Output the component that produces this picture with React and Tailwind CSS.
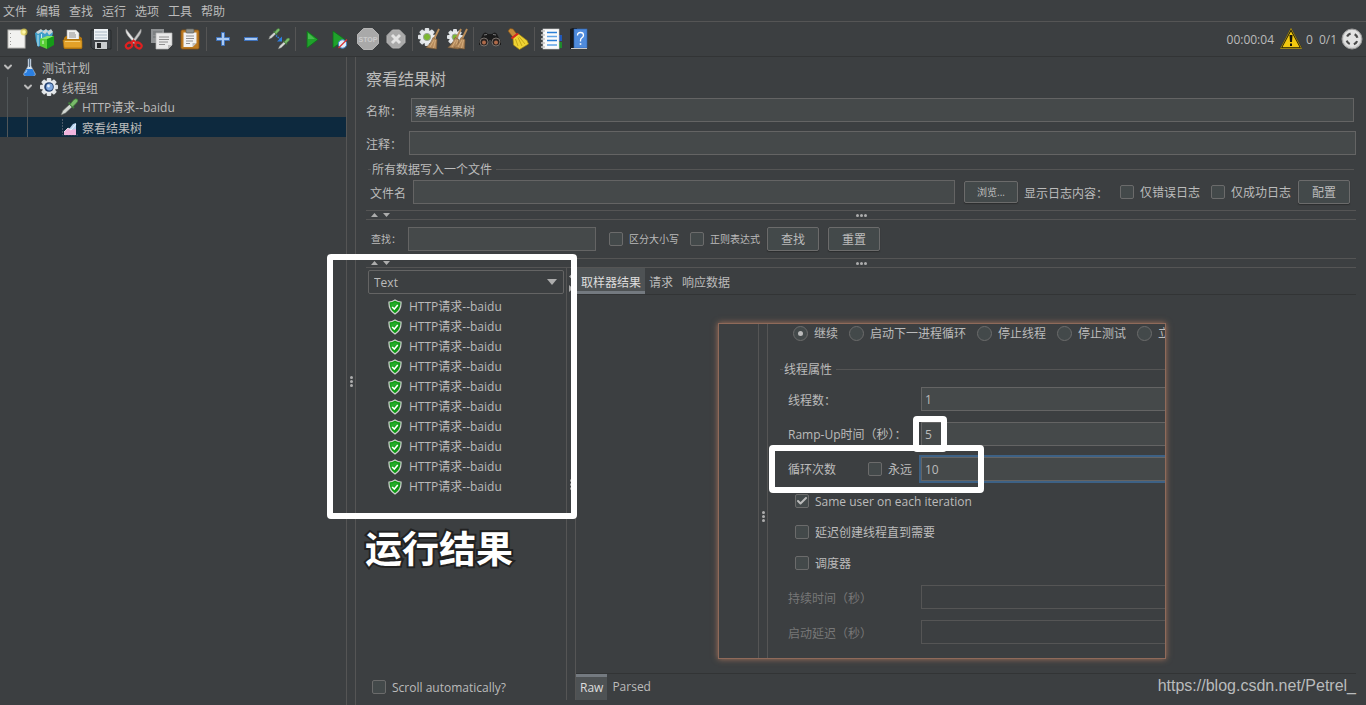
import React, { useState } from 'react';
import { Check, ChevronDown } from 'lucide-react';

const MENUS = ['文件', '编辑', '查找', '运行', '选项', '工具', '帮助'];

const RESULTS = Array.from({ length: 10 }, (_, i) => ({ id: i, name: 'HTTP请求--baidu' }));

const Svg = ({ children, w = 22, h = 22 }) => (
  <svg width={w} height={h} viewBox={`0 0 ${w} ${h}`} fill="none" aria-hidden="true" className="shrink-0">
    {children}
  </svg>
);

const Gear = ({ cx, cy, r, children }) => (
  <g>
    {[0, 45, 90, 135].map((a) => (
      <rect key={a} x={cx - r} y={cy - r / 4} width={r * 2} height={r / 2} rx="1" fill="#dfe3e6" transform={`rotate(${a} ${cx} ${cy})`} />
    ))}
    <circle cx={cx} cy={cy} r={r * 0.76} fill="#e9ecee" />
    {children}
  </g>
);

const Pipette = () => (
  <g>
    <path d="M1 17 3 12.500 10 6 12.500 8.500 5.500 15Z" fill="#d3d7d3" stroke="#6a706a" strokeWidth=".6" />
    <path d="M8.500 4.500 14 10" stroke="#3f7a3c" strokeWidth="1.800" />
    <path d="M10 6.500 13.500 2Q16 0 17.500 1.500T16 5.500L12.500 9Z" fill="#79bb6a" stroke="#3d7a35" strokeWidth=".7" />
  </g>
);

const Straws = () => (
  <g>
    <path d="M21 1 16 11" stroke="#b98c58" strokeWidth="1.800" />
    <path d="M15 9.500 19 11.500 18.500 21 8 19.500Q13 16 15 9.500Z" fill="#b58a5c" stroke="#7c5a34" strokeWidth=".6" />
    <path d="M16 12 12 19M17.500 12 15.500 20" stroke="#e2bd8b" strokeWidth=".7" />
  </g>
);

const NewIcon = () => (
  <Svg>
    <rect x="2" y="2" width="17" height="18" fill="#f2f2f0" stroke="#b9b9b5" />
    <path d="M4.500 5v1M4.500 9v1M4.500 13v1M4.500 16v1" stroke="#9b9b98" />
    <circle cx="18" cy="4" r="3.500" fill="#e8d64b" opacity=".7" />
    <circle cx="18" cy="4" r="1.800" fill="#fff8a8" />
  </Svg>
);

const TemplatesIcon = () => (
  <Svg>
    <path d="M1 5 6 2 17 2 19 5 17 12 4 19 2 13Z" fill="#3f9fc9" />
    <path d="M2 4 7 1 9 3 4 6ZM8 4 12 1 14 3 11 6ZM13 4 17 1 19 4 15 7Z" fill="#c9d4d8" />
    <path d="M4 7v11M7.500 6v4" stroke="#c6eaf5" strokeWidth="1" />
    <path d="M6 11 13 8.500 13 21 6 18Z" fill="#56cf35" />
    <path d="M13 9 20 8 20 17 13 21Z" fill="#159a18" />
    <path d="M6 11 13 8 20 8 13 11Z" fill="#8be86a" />
    <path d="M9 12.500v3.500" stroke="#e4ffd8" />
  </Svg>
);

const OpenIcon = () => (
  <Svg>
    <path d="M5 2h9l3 3v9H5Z" fill="#f2f2f2" stroke="#a8a8a8" strokeWidth=".6" />
    <path d="M7 5h6M7 7h7M7 9h7" stroke="#8e8e8e" />
    <path d="M2 10 4 8h1v3h12V8l3 2v10q0 1-1 1H3q-1 0-1-1Z" fill="#b97a10" />
    <path d="M1 12h18q1 0 1 1v7H2Z" fill="#e3a128" stroke="#a56b09" strokeWidth=".7" />
    <path d="M3 13.500h15" stroke="#f6cf76" />
  </Svg>
);

const SaveIcon = () => (
  <Svg>
    <path d="M1 2h19q1 0 1 1v18H3l-2-2Z" fill="#3d4145" stroke="#1d1f21" strokeWidth=".7" />
    <rect x="4" y="1" width="14" height="11" fill="#eef2f5" />
    <path d="M5 4h12M5 7h12M5 10h12" stroke="#a8b7c4" />
    <rect x="5" y="14" width="12" height="7" fill="#c9ccce" />
    <rect x="7" y="15" width="4" height="5" fill="#26282a" />
  </Svg>
);

const CutIcon = () => (
  <Svg>
    <path d="M3 1 14 15 12 16 5 8Q2 4 3 1Z" fill="#e6e6e6" stroke="#8c8c8c" strokeWidth=".5" />
    <path d="M18 1 8 15 10 16 16 8Q19 4 18 1Z" fill="#c8c8c8" stroke="#8c8c8c" strokeWidth=".5" />
    <ellipse cx="6" cy="17.500" rx="3.300" ry="2.600" stroke="#e02020" strokeWidth="2.200" transform="rotate(-35 6 17.500)" />
    <ellipse cx="15.500" cy="17.500" rx="3.300" ry="2.600" stroke="#e02020" strokeWidth="2.200" transform="rotate(35 15.500 17.500)" />
    <path d="M8 15 10.500 12.500 13.500 15" stroke="#e02020" strokeWidth="2" />
  </Svg>
);

const CopyIcon = () => (
  <Svg>
    <path d="M0 1h13v14H0Z" fill="#8f9294" />
    <path d="M2 4h9M2 6h9M2 9h6" stroke="#6c7073" />
    <path d="M5 5h16v12l-4 4H5Z" fill="#e9e9e9" stroke="#b5b5b5" strokeWidth=".7" />
    <path d="M8 9h10M8 11.500h10M8 14h9M8 16.500h6" stroke="#8e8e8e" />
    <path d="M21 17h-4v4Z" fill="#bdbdbd" />
  </Svg>
);

const PasteIcon = () => (
  <Svg>
    <rect x="2" y="2" width="18" height="19" rx="1.500" fill="#bd7b22" stroke="#8a5410" strokeWidth=".8" />
    <path d="M4.500 4.500h13V15l-4 4h-9Z" fill="#f2f2f2" />
    <path d="M7 8h8M7 10.500h8M7 13h7M7 15.500h4" stroke="#8e8e8e" />
    <path d="M13.500 19v-4h4Z" fill="#bcbcbc" />
    <rect x="7" y="1" width="8" height="4" rx="1" fill="#8e918c" stroke="#5c5f5b" strokeWidth=".7" />
  </Svg>
);

const PlusIcon = () => (
  <Svg>
    <path d="M9.500 4.500h3v5h5v3h-5v5h-3v-5h-5v-3h5Z" fill="#a9c9f2" stroke="#3f72bb" />
  </Svg>
);

const MinusIcon = () => (
  <Svg>
    <rect x="4.500" y="9.500" width="13" height="3" fill="#a9c9f2" stroke="#3f72bb" />
  </Svg>
);

const ToggleIcon = () => (
  <Svg>
    <g transform="scale(.66)"><Pipette /></g>
    <g transform="translate(9.500 9.500) scale(.68)"><Pipette /></g>
    <path d="M8 7.500 12.500 11.500" stroke="#2f7ee0" strokeWidth="1.600" strokeDasharray="1.500 .8" />
    <path d="M14 8.500v5H9Z" fill="#2f7ee0" />
  </Svg>
);

const PlayIcon = () => (
  <Svg>
    <path d="M6 3 17 11.500 6 20Z" fill="#1fa22b" stroke="#0f6f1b" strokeWidth=".8" />
    <path d="M7 5 14 11 7 11Z" fill="#57c45c" opacity=".7" />
  </Svg>
);

const PlayNoPauseIcon = () => (
  <Svg>
    <path d="M4 3 16 11.500 4 20Z" fill="#1fa22b" stroke="#0f6f1b" strokeWidth=".8" />
    <circle cx="13.500" cy="16" r="4.200" fill="#dfeefa" stroke="#3c82c9" />
    <path d="M9.500 20 18 11.500" stroke="#d93333" strokeWidth="1.300" />
  </Svg>
);

const StopIcon = () => (
  <Svg>
    <path d="M6.500.5h9l6 6v9l-6 6h-9l-6-6v-9Z" fill="#a9a9a9" stroke="#b4b4b4" />
    <text x="11" y="14" textAnchor="middle" fontSize="7" fontFamily="Liberation Sans, sans-serif" fontWeight="bold" fill="#cccccc">STOP</text>
  </Svg>
);

const ShutdownIcon = () => (
  <Svg>
    <path d="M7.500 2h7l5.500 5.500v7L14.500 20h-7L2 14.500v-7Z" fill="#a9a9a9" stroke="#b4b4b4" />
    <path d="M7 7 15 15M15 7 7 15" stroke="#e3e3e3" strokeWidth="3" />
  </Svg>
);

const ClearIcon = () => (
  <Svg>
    <Gear cx={9} cy={9} r={9}>
      <circle cx="9" cy="9" r="3.600" fill="#7cb832" stroke="#9aa39a" />
    </Gear>
    <Straws />
  </Svg>
);

const ClearAllIcon = () => (
  <Svg>
    <Gear cx={9} cy={9} r={8}>
      <circle cx="9" cy="9" r="3" fill="#7cb832" stroke="#9aa39a" />
    </Gear>
    <g transform="translate(-6 0)"><Straws /></g>
    <Straws />
  </Svg>
);

const BinocularsIcon = () => (
  <Svg>
    <path d="M4 6Q6 3 9 6h4Q16 3 18 6l4 8v3h-8l-2-5h-2l-2 5H0v-3Z" fill="#1b1b1b" />
    <path d="M5 7 8 6.500M14 6.500 17 7" stroke="#7a7a7a" />
    <circle cx="5" cy="14" r="4" fill="#2a2220" stroke="#77716c" />
    <circle cx="17" cy="14" r="4" fill="#2a2220" stroke="#77716c" />
    <circle cx="5" cy="14.500" r="2" fill="#b06b4a" />
    <circle cx="17" cy="14.500" r="2" fill="#b06b4a" />
  </Svg>
);

const BroomIcon = () => (
  <Svg>
    <path d="M1 3 3 .5 6 1 10.500 7 6.500 10Z" fill="#c58a3a" stroke="#7e4f16" strokeWidth=".6" />
    <path d="M6 10 11.500 6 20 12.500 21.500 16 12.500 21.500 6.500 17Z" fill="#eed233" stroke="#a8890d" strokeWidth=".7" />
    <path d="M8.500 11 11 18M11 9.500 15 18M12 8.500 18 16" stroke="#b99b10" strokeWidth=".8" />
    <path d="M4.500 10.500 11 5.500" stroke="#d8281e" strokeWidth="2.200" />
  </Svg>
);

const FunctionIcon = () => (
  <Svg>
    <rect x="17" y="7" width="5" height="6" fill="#2158b8" />
    <rect x="17" y="14" width="5" height="6" fill="#1f8a2c" />
    <rect x="3" y="1" width="16" height="20" fill="#fbfbfb" stroke="#cfcfcf" strokeWidth=".6" />
    <path d="M7 4.500h10M7 12.500h10" stroke="#2b7fd6" strokeWidth="1.500" />
    <path d="M7 8.500h10M7 17h10" stroke="#5fa3e6" strokeWidth="1.500" />
    {[3, 7, 11, 15, 19].map((y) => (
      <path key={y} d={`M1 ${y}h4`} stroke="#c4c4c4" strokeWidth="1.500" />
    ))}
  </Svg>
);

const HelpIcon = () => (
  <Svg>
    <path d="M2 1 5 0h4v21H2Z" fill="#17191c" />
    <rect x="6" y="1" width="13" height="19" fill="#4f8bdc" stroke="#2e63b0" strokeWidth=".6" />
    <path d="M3 20.500h16" stroke="#c8c8c8" />
    <path d="M9.500 7.500q0-3 3-3t3 2.800q0 1.500-1.600 2.500-1.400.9-1.400 2.700v1" stroke="#fff" strokeWidth="1.300" />
    <path d="M11.700 15.200h1.600v1.600h-1.600Z" fill="#fff" />
  </Svg>
);

const TOOL_GROUPS = [
  [['新建', NewIcon], ['模板', TemplatesIcon], ['打开', OpenIcon], ['保存', SaveIcon]],
  [['剪切', CutIcon], ['复制', CopyIcon], ['粘贴', PasteIcon]],
  [['展开', PlusIcon], ['折叠', MinusIcon], ['切换', ToggleIcon]],
  [['启动', PlayIcon], ['不停顿启动', PlayNoPauseIcon], ['停止', StopIcon], ['关闭', ShutdownIcon]],
  [['清除', ClearIcon], ['清除全部', ClearAllIcon]],
  [['搜索', BinocularsIcon], ['重置搜索', BroomIcon]],
  [['函数助手', FunctionIcon], ['帮助', HelpIcon]],
];

const WarningIcon = () => (
  <Svg>
    <path d="M11 1.500 21 20H1Z" fill="#f2c80f" stroke="#1d1a08" strokeWidth="1.600" strokeLinejoin="round" />
    <path d="M11 .5 21.500 20.500H.5Z" stroke="#b89a1c" strokeWidth=".8" strokeLinejoin="round" />
    <path d="M9.500 7h3L12 14h-2ZM10 15.500h2v2.500h-2Z" fill="#15130a" />
  </Svg>
);

const TargetIcon = () => (
  <Svg>
    <circle cx="11" cy="11" r="10" fill="#cfcfcf" stroke="#9c9c9c" />
    <circle cx="11" cy="10.500" r="8.500" fill="#e3e3e3" />
    <circle cx="11" cy="11" r="5.500" stroke="#4a4a4a" strokeWidth="2.200" strokeDasharray="4.400 4.240" strokeDashoffset="-2.120" />
  </Svg>
);

const FlaskIcon = () => (
  <Svg w={18} h={18}>
    <path d="M8 1h3v7l4.500 8q0 2-2 2H5.500q-2 0-2-2L8 8Z" fill="#d5e2ee" stroke="#8e9cab" strokeWidth=".6" />
    <path d="M6.500 11h6l2.500 5q0 2-2 2H6q-2 0-2-2Z" fill="#2b7fe0" />
    <path d="M9.500 0v9" stroke="#5e7387" />
    <path d="M7 12 5.500 15" stroke="#a9d2fa" />
  </Svg>
);

const GearIcon = () => (
  <Svg w={18} h={18}>
    <Gear cx={9} cy={9} r={9}>
      <circle cx="9" cy="9" r="4.800" fill="#24406e" />
      <circle cx="9.500" cy="9" r="3.400" fill="#7fa8de" />
      <circle cx="8.500" cy="8" r="1.400" fill="#e7f0fc" />
    </Gear>
  </Svg>
);

const PipetteIcon = () => (
  <Svg w={18} h={18}><Pipette /></Svg>
);

const ChartIcon = () => (
  <Svg w={18} h={18}>
    <path d="M2.500 1v16H18" stroke="#4a5867" strokeDasharray="2 1" />
    <path d="M9 11 13 6 16 5V16H9Z" fill="#b8d3f0" />
    <path d="M4 14 8 10 11 12 16 11V17H4Z" fill="#f0b4dd" />
    <path d="M4 14 8 10 11 12 16 6" stroke="#fff" strokeWidth=".8" />
  </Svg>
);

const ShieldIcon = () => (
  <Svg w={14} h={16}>
    <path d="M7 1Q10 3 13 3Q13.500 11 7 15Q.5 11 1 3Q4 3 7 1Z" fill="#0c9a12" stroke="#cdd0cd" strokeWidth="1.200" />
    <path d="M7 3Q4.500 4.500 2.500 4.500q0 3 1 4.500L11.500 5Q9 4.500 7 3Z" fill="#35b53a" opacity=".6" />
    <path d="M4.200 8 6.300 10 9.800 6" stroke="#fff" strokeWidth="1.600" />
  </Svg>
);

const CheckBox = ({ label, className = '', small, ...props }) => (
  <label className={`flex items-center ${small ? 'text-[10px]' : ''} ${className}`}>
    <span className="mr-1.5 grid shrink-0 place-items-center">
      <input
        type="checkbox"
        className="peer col-start-1 row-start-1 size-3.5 appearance-none rounded-xs border border-[#6b6b6b] bg-[#43494a]"
        {...props}
      />
      <Check className="pointer-events-none col-start-1 row-start-1 hidden size-3 peer-checked:block" strokeWidth={4} />
    </span>
    <span className="pt-0.5">{label}</span>
  </label>
);

const Radio = ({ label, ...props }) => (
  <label className="flex shrink-0 items-center">
    <span className="mr-1.5 grid place-items-center">
      <input
        type="radio"
        name="onError"
        className="peer col-start-1 row-start-1 size-[15px] appearance-none rounded-full border border-[#6b6b6b] bg-[#43494a]"
        {...props}
      />
      <span className="pointer-events-none col-start-1 row-start-1 hidden size-[5px] rounded-full bg-[#bbbbbb] peer-checked:block" />
    </span>
    <span className="pt-0.5">{label}</span>
  </label>
);

const Button = ({ children, className = '' }) => (
  <button className={`shrink-0 rounded-xs border border-[#6b6b6b] bg-[#43494a] pt-0.5 shadow-[0_1px_1px_#2b2d2e] ${className}`}>{children}</button>
);

const TextInput = ({ className = '', ...props }) => (
  <input
    type="text"
    className={`h-6 min-w-0 border border-[#646464] bg-[#45494a] outline-none ${className}`}
    {...props}
  />
);

const Dots = ({ vertical }) => (
  <span className={`flex gap-px ${vertical ? 'flex-col' : ''}`}>
    <i className="size-[3px] rounded-full bg-[#adadad]" />
    <i className="size-[3px] rounded-full bg-[#adadad]" />
    <i className="size-[3px] rounded-full bg-[#adadad]" />
  </span>
);

const Arrows = () => (
  <svg width="24" height="6" viewBox="0 0 24 6" aria-hidden="true" className="ml-1">
    <path d="M1 5 4.500 1 8 5ZM13 1h7L16.500 5Z" fill="#adadad" />
  </svg>
);

const HorizontalSplitter = () => (
  <div className="grid h-2.5 shrink-0 grid-cols-[1fr_auto_1fr] items-center border-y border-[#555555]">
    <Arrows />
    <Dots />
  </div>
);

const Legend = ({ children }) => (
  <legend className="flex h-[18px] w-full items-center">
    <span className="w-[3px] border-t border-[#555555]" />
    <span className="ml-px pt-0.5">{children}</span>
    <span className="ml-1 flex-1 border-t border-[#555555]" />
  </legend>
);

const TreeRow = ({ children, className = '' }) => (
  <li className={`flex h-5 items-center ${className}`}>{children}</li>
);

const Guide = () => <span className="ml-[7px] mr-3 h-5 w-px shrink-0 bg-[#515658]" />;

function TestPlanTree() {
  return (
    <ul className="w-[346px] shrink-0">
      <TreeRow>
        <ChevronDown className="ml-[2px] mr-1.5 size-3" strokeWidth={4} />
        <FlaskIcon />
        <span className="ml-1 pt-1">测试计划</span>
      </TreeRow>
      <TreeRow>
        <Guide />
        <ChevronDown className="ml-[2px] mr-1.5 size-3" strokeWidth={4} />
        <GearIcon />
        <span className="ml-1 pt-1">线程组</span>
      </TreeRow>
      <TreeRow>
        <Guide />
        <Guide />
        <span className="ml-5"><PipetteIcon /></span>
        <span className="ml-1 pt-0.5">HTTP请求--baidu</span>
      </TreeRow>
      <TreeRow className="bg-[#0d293e]">
        <Guide />
        <Guide />
        <span className="ml-5"><ChartIcon /></span>
        <span className="ml-1 pt-1">察看结果树</span>
      </TreeRow>
    </ul>
  );
}

function Toolbar() {
  return (
    <div className="flex h-[35px] shrink-0 items-center border-b border-[#323435] pl-[3px]">
      {TOOL_GROUPS.map((group, i) => (
        <React.Fragment key={i}>
          {i > 0 && <span className="mx-0.5 h-6 w-px bg-[#555555]" />}
          {group.map(([name, Icon]) => (
            <button key={name} aria-label={name} className="flex size-7 items-center justify-center">
              <Icon />
            </button>
          ))}
        </React.Fragment>
      ))}
      <div className="ml-auto flex items-center pr-[3px]">
        <span className="mr-1.5 pt-0.5">00:00:04</span>
        <WarningIcon />
        <span className="ml-1 mr-1.5 pt-0.5">0</span>
        <span className="mr-1 pt-0.5">0/1</span>
        <TargetIcon />
      </div>
    </div>
  );
}

function ResultList() {
  const [autoScroll, setAutoScroll] = useState(false);

  return (
    <div className="flex w-[200px] shrink-0 flex-col">
      <div className="mx-0.5 mt-0.5 grid items-center">
        <select
          aria-label="Renderer"
          defaultValue="Text"
          className="col-start-1 row-start-1 h-6 appearance-none rounded-xs border border-[#646464] bg-[#3c3f41] px-[5px] pt-0.5"
        >
          <option>Text</option>
        </select>
        <svg width="10" height="6" viewBox="0 0 10 6" aria-hidden="true" className="pointer-events-none col-start-1 row-start-1 mr-[7px] justify-self-end">
          <path d="M0 0h10L5 6Z" fill="#adadad" />
        </svg>
      </div>
      <ul className="mt-[3px]">
        {RESULTS.map((result) => (
          <li key={result.id} className="flex h-5 items-center pl-[22px]">
            <ShieldIcon />
            <span className="ml-[7px]">{result.name}</span>
          </li>
        ))}
      </ul>
      <CheckBox
        label="Scroll automatically?"
        className="mb-1 ml-1.5 mt-auto"
        checked={autoScroll}
        onChange={(e) => setAutoScroll(e.target.checked)}
      />
    </div>
  );
}

function ResultTabs() {
  return (
    <div className="flex min-w-0 flex-1 flex-col">
      <div className="flex h-[27px] items-stretch border-b border-[#323435]">
        <button className="border-b-3 border-[#747a80] bg-[#4e5254] pl-[5px] pr-1 pt-1.5 text-[#dddddd]">取样器结果</button>
        <button className="px-1 pt-[3px]">请求</button>
        <button className="px-[5px] pt-[3px]">响应数据</button>
      </div>
      <div className="flex-1" />
      <div className="flex h-[27px] items-stretch border-t border-[#323435]">
        <button className="border-t-3 border-[#747a80] bg-[#4e5254] px-1 pb-0.5 text-[#dddddd]">Raw</button>
        <button className="px-[5px]">Parsed</button>
      </div>
    </div>
  );
}

function ResultsTreePanel() {
  return (
    <main className="flex min-w-0 flex-1 flex-col px-2.5 pb-[5px]">
      <h1 className="flex h-[41px] shrink-0 items-center pt-0.5 text-base">察看结果树</h1>
      <div className="flex items-center pr-0.5">
        <label htmlFor="name" className="w-[45px] shrink-0 pt-[3px]">名称：</label>
        <TextInput id="name" defaultValue="察看结果树" className="flex-1 px-[3px] pt-0.5" />
      </div>
      <div className="mt-[9px] flex items-center">
        <label htmlFor="comment" className="w-[43px] shrink-0 pt-[3px]">注释：</label>
        <TextInput id="comment" className="flex-1" />
      </div>
      <fieldset className="mx-0.5 mb-1.5 mt-[5px]">
        <Legend>所有数据写入一个文件</Legend>
        <div className="mt-0.5 flex h-6 items-center pl-0.5 pr-1">
          <label htmlFor="file" className="w-[43px] shrink-0 pt-[3px]">文件名</label>
          <TextInput id="file" className="flex-1" />
          <Button className="ml-[9px] mr-1.5 h-[22px] w-[54px] text-[10px]">浏览...</Button>
          <span className="w-24 shrink-0 pt-[3px]">显示日志内容：</span>
          <CheckBox label="仅错误日志" className="shrink-0" />
          <CheckBox label="仅成功日志" className="ml-[11px] mr-[7px] shrink-0" />
          <Button className="h-6 w-[52px]">配置</Button>
        </div>
      </fieldset>
      <HorizontalSplitter />
      <div className="flex items-center py-[7px] pl-[5px]">
        <label htmlFor="search" className="w-[37px] shrink-0 pt-0.5 text-[10px]">查找：</label>
        <TextInput id="search" className="mr-[13px] w-[188px]" />
        <CheckBox small label="区分大小写" className="mr-[11px]" />
        <CheckBox small label="正则表达式" className="mr-[7px]" />
        <Button className="mr-[9px] h-6 w-[52px]">查找</Button>
        <Button className="h-6 w-[52px]">重置</Button>
      </div>
      <HorizontalSplitter />
      <div className="flex min-h-0 flex-1">
        <ResultList />
        <div className="grid w-2.5 shrink-0 grid-rows-[1fr_auto_1fr] justify-items-center border-x border-[#555555]">
          <svg width="6" height="24" viewBox="0 0 6 24" aria-hidden="true" className="mt-1">
            <path d="M5 1 1 4.500 5 8ZM1 13v7L5 16.500Z" fill="#adadad" />
          </svg>
          <Dots vertical />
        </div>
        <ResultTabs />
      </div>
    </main>
  );
}

// thread group settings, floating above the results
function ThreadGroupCard() {
  return (
    <section className="absolute left-[718px] top-[323px] flex h-[336px] w-[448px] overflow-hidden border border-[#8f6a5a] bg-[#3c3f41] shadow-[0_0_6px_#a8745c]">
      <div className="w-[39px] shrink-0" />
      <div className="flex w-2.5 shrink-0 flex-col items-center border-x border-[#555555] pt-[187px]">
        <Dots vertical />
      </div>
      <div className="min-w-0 flex-1 pl-3">
        <div className="flex h-[18px] items-center gap-[11px] pl-[13px]">
          <Radio label="继续" defaultChecked />
          <Radio label="启动下一进程循环" />
          <Radio label="停止线程" />
          <Radio label="停止测试" />
          <Radio label="立" />
        </div>
        <fieldset className="mt-[18px]">
          <Legend>线程属性</Legend>
          <div className="mt-[9px] grid grid-cols-[133px_1fr] items-center gap-y-[11px] pl-2">
            <label htmlFor="threads" className="pt-[3px]">线程数：</label>
            <TextInput id="threads" defaultValue="1" className="border-r-0 px-[3px]" />
            <label htmlFor="ramp" className="pt-0.5">Ramp-Up时间（秒）：</label>
            <TextInput id="ramp" defaultValue="5" className="border-r-0 px-[3px]" />
            <div className="flex items-center">
              <label htmlFor="loops" className="w-20 pt-0.5">循环次数</label>
              <CheckBox label="永远" />
            </div>
            <TextInput id="loops" defaultValue="10" className="border-r-0 border-[#466d94] px-[3px] ring-2 ring-[#3d6185]" />
          </div>
          <div className="mt-[11px] flex flex-col gap-[13px] pl-[15px]">
            <CheckBox label="Same user on each iteration" defaultChecked className="h-[18px]" />
            <CheckBox label="延迟创建线程直到需要" className="h-[18px]" />
            <CheckBox label="调度器" className="h-[18px]" />
          </div>
          <div className="mt-[13px] grid grid-cols-[133px_1fr] items-center gap-y-[11px] pl-2 text-[#777777]">
            <label htmlFor="duration" className="pt-[3px]">持续时间（秒）</label>
            <input id="duration" disabled className="h-6 min-w-0 border border-r-0 border-[#555555]" />
            <label htmlFor="delay" className="pt-[3px]">启动延迟（秒）</label>
            <input id="delay" disabled className="h-6 min-w-0 border border-r-0 border-[#555555]" />
          </div>
        </fieldset>
      </div>
    </section>
  );
}

const Highlight = ({ className }) => (
  <div className={`pointer-events-none absolute rounded-sm border-6 border-white ${className}`} />
);

export default function App() {
  return (
    <div className="relative flex h-screen flex-col overflow-hidden bg-[#3c3f41] font-['Open_Sans','Noto_Sans_CJK_SC',sans-serif] text-xs text-[#bbbbbb]">
      <nav className="flex h-[22px] shrink-0 items-center gap-[9px] border-b border-[#555555] pl-[3px] pt-0.5">
        {MENUS.map((menu) => (
          <button key={menu}>{menu}</button>
        ))}
      </nav>
      <Toolbar />
      <div className="flex min-h-0 flex-1">
        <TestPlanTree />
        <div className="flex w-2.5 shrink-0 flex-col items-center justify-center border-x border-[#555555]">
          <Dots vertical />
        </div>
        <ResultsTreePanel />
      </div>

      <ThreadGroupCard />
      <Highlight className="left-[913px] top-[416px] h-9 w-[34px]" />
      <Highlight className="left-[769px] top-[445px] h-12 w-[215px]" />
      <Highlight className="left-[327px] top-[254px] h-[265px] w-[250px]" />
      <p className="absolute left-[365px] top-[522px] text-[37px] font-bold leading-[54px] text-white [paint-order:stroke] [-webkit-text-stroke:4px_#222222]">
        运行结果
      </p>
      <a
        href="https://blog.csdn.net/Petrel_"
        className="absolute bottom-2 right-[10px] font-['Liberation_Sans',sans-serif] text-base leading-[22px] text-[#b9bbbc]"
      >
        https://blog.csdn.net/Petrel_
      </a>
    </div>
  );
}
